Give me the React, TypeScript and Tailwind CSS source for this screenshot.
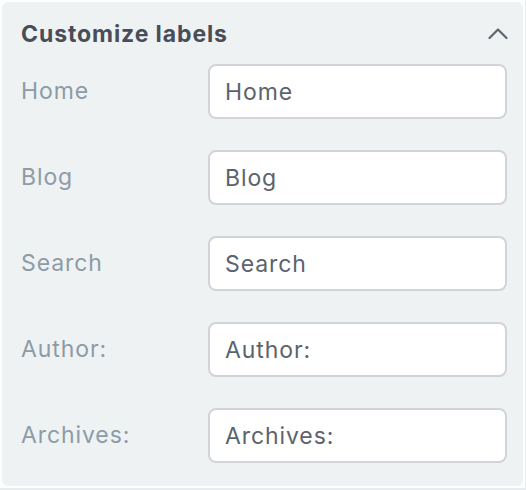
import { useState } from "react";

const fields = ["Home", "Blog", "Search", "Author:", "Archives:"];

function ChevronUp() {
  return (
    <svg width="20" height="13" viewBox="0 0 20 13" fill="none">
      <path
        d="M1.5 11L10 2.5L18.5 11"
        stroke="#5f6670"
        strokeWidth="2.2"
        strokeLinecap="round"
        strokeLinejoin="round"
      />
    </svg>
  );
}

export default function App() {
  const [values, setValues] = useState<string[]>(fields);

  return (
    <div
      className="w-[526px] h-[490px] bg-[#e8ecee] overflow-hidden"
      style={{ fontFamily: "Inter, 'Noto Sans', sans-serif" }}
    >
      <div className="h-[488px] bg-white p-[2px] w-[525px]">
        <div className="h-full bg-[#eff2f3] rounded-[6px] pl-[19px] pr-[15px] pt-[16px]">
          <div className="flex items-center justify-between h-[32px]">
            <h2 className="text-[23px] font-bold text-[#484d57] tracking-[0.9px]">
              Customize labels
            </h2>
            <button className="mt-[-2px]">
              <ChevronUp />
            </button>
          </div>
          <div className="flex flex-col gap-[31px] mt-[14px]">
            {fields.map((label, i) => (
              <div key={label} className="flex items-center">
                <label className="w-[187px] text-[23px] tracking-[0.9px] text-[#8d9ba7]">
                  {label}
                </label>
                <input
                  value={values[i]}
                  onChange={(e) => {
                    const next = [...values];
                    next[i] = e.target.value;
                    setValues(next);
                  }}
                  className="w-[299px] h-[55px] bg-white border-2 border-[#d0d4d9] rounded-[8px] px-[15px] text-[23px] tracking-[0.9px] text-[#5b636d] outline-none"
                />
              </div>
            ))}
          </div>
        </div>
      </div>
    </div>
  );
}
